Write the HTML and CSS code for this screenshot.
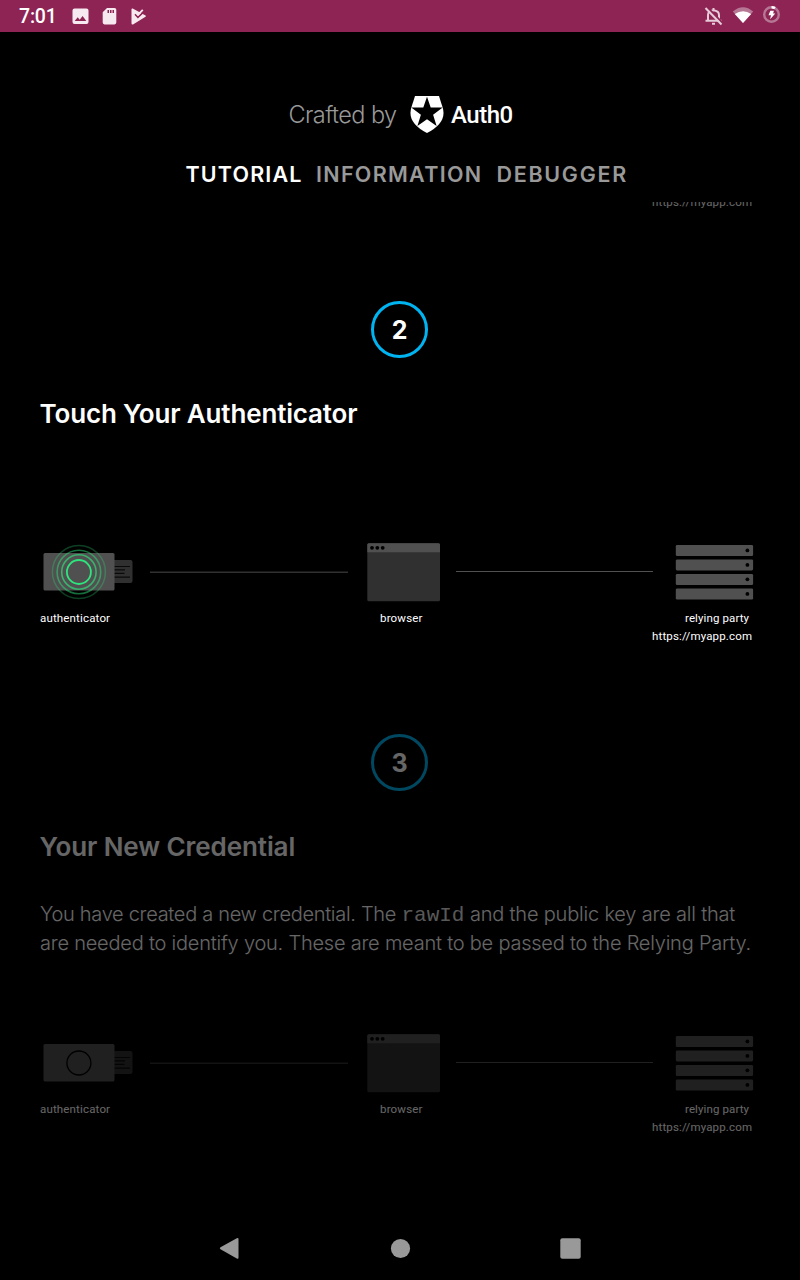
FILE: index.html
```html
<!DOCTYPE html>
<html lang="en">
<head>
<meta charset="utf-8">
<title>WebAuthn Tutorial</title>
<link rel="stylesheet" href="styles.css">
</head>
<body>
<svg width="0" height="0" class="defs">
  <defs>
    <g id="parties">
      <rect x="72" y="30" width="20.500" height="23" rx="2" fill="#303030"/>
      <path d="M72 36.500h18M72 39.900h13M72 43.400h12.500M72 47.200h18" stroke="#0a0a0a" stroke-width="1.200"/>
      <rect x="3.500" y="23" width="71" height="37.500" rx="1.500" fill="#505050"/>
      <path d="M110 42.300h198" stroke="#303030" stroke-width="1.500"/>
      <path d="M416 41.500h197" stroke="#505050" stroke-width="1"/>
      <rect x="327.300" y="13.300" width="72.700" height="57.900" rx="1.500" fill="#303030"/>
      <path d="M327.300 22.200v-7.400q0-1.500 1.500-1.500h69.700q1.500 0 1.500 1.500v7.400z" fill="#505050"/>
      <circle cx="332" cy="17.800" r="1.900"/><circle cx="337.300" cy="17.800" r="1.900"/><circle cx="342.700" cy="17.800" r="1.900"/>
      <g fill="#505050">
        <rect x="635.800" y="15" width="77.300" height="11" rx="1.300"/>
        <rect x="635.800" y="29.400" width="77.300" height="11" rx="1.300"/>
        <rect x="635.800" y="44" width="77.300" height="11" rx="1.300"/>
        <rect x="635.800" y="58.500" width="77.300" height="11" rx="1.300"/>
      </g>
      <circle cx="707.400" cy="20.400" r="1.900"/><circle cx="707.400" cy="34.900" r="1.900"/><circle cx="707.400" cy="49.300" r="1.900"/><circle cx="707.400" cy="63.900" r="1.900"/>
    </g>
  </defs>
</svg>
<div class="screen">
  <div class="status">
    <span class="time">7:01</span>
    <svg class="status-left" width="80" height="32" viewBox="0 0 80 32" fill="#f6e9ef">
      <path fill-rule="evenodd" d="M4.500 8.500h12q2 0 2 2v11.500q0 2-2 2h-12q-2 0-2-2v-11.500q0-2 2-2zM4.700 21h11.600l-3.700-5-2.900 3.700-2-2.400z"/>
      <path fill-rule="evenodd" d="M37 8h7.500q1.800 0 1.800 1.800v12.800q0 1.800-1.800 1.800h-10q-1.800 0-1.800-1.800V12.300zM37.500 10v3h1.500v-3zM40 10v3h1.500v-3zM42.500 10v3h1.500v-3z"/>
      <path d="M61.500 9q.4-.9 1.200-.4l12.800 6.900q1 .6 0 1.200l-12.500 7.700q-1.500.4-1.500-1z"/>
      <path d="M65 14.300l2.900 3 7.300-7" fill="none" stroke="#8e2454" stroke-width="1.600"/>
      <path d="M65.800 12.400l2.200 2.200 4.800-4.700" fill="none" stroke="#f6e9ef" stroke-width="1.900"/>
    </svg>
    <svg class="status-right" width="80" height="32" viewBox="0 0 80 32">
      <g fill="none" stroke="#e6cbd8" stroke-width="2">
        <path d="M8 20.500v-5.500q0-4 5.500-4.700q5.500.7 5.500 4.700v5.500"/>
        <path d="M5.500 20.800h16M13.500 10.500v-2.500M12 23.700h3"/>
        <path d="M7 7l16 16.500" stroke="#8e2454" stroke-width="2"/>
        <path d="M5.500 8l16 16.500"/>
      </g>
      <path d="M43 23L32.800 11.500q10.200-8.500 20.400 0z" fill="#b67795"/>
      <path d="M43 23l-8.200-9q8.200-5.500 16.400 0z" fill="#fff"/>
      <circle cx="71.500" cy="14.500" r="7.300" fill="none" stroke="#b67795" stroke-width="2.400"/>
      <path d="M71.500 7.200q2 0 3.500 1" fill="none" stroke="#fff" stroke-width="2.600"/>
      <path d="M70.300 10.700h3.600l-.8 2.800h2.200l-5.200 5.700.9-4h-2.500z" fill="#fff"/>
    </svg>
  </div>

  <header class="header">
    <div class="brand">
      <span class="crafted">Crafted by</span>
      <svg class="shield" width="34" height="38" viewBox="0 0 34 38">
        <path d="M5 1h24l3.800 12Q37 27.500 17 38Q-3 27.500 1.200 13z" fill="#fff"/>
        <path d="M17 1.800l3.700 10.700h12l-9.600 7.300 3.500 11.300-9.600-6.900-9.600 6.900 3.500-11.300-9.600-7.300h12z"/>
      </svg>
      <span class="auth">Auth0</span>
    </div>
    <nav class="tabs">
      <span class="tab tab-1 active">TUTORIAL</span>
      <span class="tab tab-2">INFORMATION</span>
      <span class="tab tab-3">DEBUGGER</span>
    </nav>
  </header>

  <main class="content">
    <section class="step dim first">
      <svg class="diagram" viewBox="0 0 720 120">
        <use href="#parties"/>
        <text class="label" x="612" y="109" textLength="100">https://myapp.com</text>
      </svg>
    </section>

    <section class="step">
      <div class="number">2</div>
      <h2 class="title title-touch">Touch Your Authenticator</h2>
      <svg class="diagram" viewBox="0 0 720 120">
        <use href="#parties"/>
        <g fill="none" stroke="#2ee57d">
          <circle cx="38.900" cy="42" r="26.500" stroke-width="1.500" opacity=".28"/>
          <circle cx="38.900" cy="42" r="21.800" stroke-width="1.600" opacity=".48"/>
          <circle cx="38.900" cy="42" r="17.200" stroke-width="1.600" opacity=".65"/>
          <circle cx="38.900" cy="42" r="12" stroke-width="1.800"/>
        </g>
        <text class="label" x="0" y="92" textLength="70">authenticator</text>
        <text class="label" x="340" y="92" textLength="42.500">browser</text>
        <text class="label" x="645" y="92" textLength="64">relying party</text>
        <text class="label" x="612" y="110" textLength="100">https://myapp.com</text>
      </svg>
    </section>

    <section class="step dim">
      <div class="number">3</div>
      <h2 class="title title-cred">Your New Credential</h2>
      <p class="text"><span class="l1a">You have created a new credential. The </span><code>rawId</code><span class="l1b"> and the public key are all that</span><br><span class="l2">are needed to identify you. These are meant to be passed to the Relying Party.</span></p>
      <svg class="diagram" viewBox="0 0 720 120">
        <use href="#parties"/>
        <circle cx="38.900" cy="42" r="12" fill="none" stroke="#000" stroke-width="1.300"/>
        <text class="label" x="0" y="92" textLength="70">authenticator</text>
        <text class="label" x="340" y="92" textLength="42.500">browser</text>
        <text class="label" x="645" y="92" textLength="64">relying party</text>
        <text class="label" x="612" y="110" textLength="100">https://myapp.com</text>
      </svg>
    </section>
  </main>

  <footer class="navbar">
    <svg width="400" height="64" viewBox="200 1216 400 64" fill="#999">
      <path d="M220.500 1247.300L236.800 1238.200Q238.500 1237.300 238.500 1239V1257.500Q238.500 1259.300 236.800 1258.400L220.500 1249.300Q219 1248.300 220.500 1247.300z"/>
      <circle cx="400.500" cy="1248.500" r="9.600"/>
      <rect x="560.300" y="1238.300" width="20.400" height="20.400" rx="2"/>
    </svg>
  </footer>
</div>
</body>
</html>
```

FILE: styles.css
```css
* { box-sizing: border-box; }
body { margin: 0; background: #000; color: #fff; font-family: Inter, "Liberation Sans", sans-serif; }
.defs { display: block; }
.screen { width: 800px; height: 1280px; display: flex; flex-direction: column; overflow: hidden; background: #000; }

.status { height: 32px; flex: none; display: flex; align-items: center; background: #8e2454; padding: 0 20px 0 19px; }
.time { font: 500 19.500px/32px Roboto, sans-serif; color: #fff; width: 51px; padding-top: 1px; letter-spacing: -0.2px; white-space: nowrap; }
.status-right { margin-left: auto; }

.header { height: 170px; flex: none; padding-top: 63px; }
.brand { display: flex; align-items: center; height: 38px; padding-left: 288.500px; white-space: nowrap; }
.crafted { width: 121px; font-size: 23.500px; font-weight: 300; color: #999; letter-spacing: -0.6px; }
.auth { font: 500 24px/38px Roboto, sans-serif; margin-left: 7.500px; padding-top: 2px; letter-spacing: -0.5px; }
.tabs { display: flex; margin-top: 27px; padding-left: 185.500px; font-size: 21.500px; line-height: 28px; font-weight: 600; letter-spacing: 1.3px; color: #999; white-space: nowrap; }
.tab-1 { width: 130.500px; letter-spacing: 1.15px; }
.tab-2 { width: 180.500px; }
.tab-3 { letter-spacing: 1.7px; }
.active { color: #fff; }

.content { flex: 1; min-height: 0; overflow: hidden; padding: 0 40px; }
.dim { opacity: 0.4; }
.first { margin-top: -105px; }
.step { margin-bottom: 84px; }
.number { width: 57px; height: 57px; margin: 0 auto; border: 3px solid #00b4f1; border-radius: 50%; font-size: 25px; font-weight: 700; line-height: 52px; text-align: center; position: relative; left: -0.5px; }
.title { margin: 40px 0 0 -0.5px; font-size: 26px; line-height: 32px; height: 32px; font-weight: 600; letter-spacing: -0.16px; white-space: nowrap; }
.title-cred { letter-spacing: -0.08px; }
.diagram { display: block; width: 720px; height: 120px; margin-top: 100px; }
.first .diagram { margin-top: 0; }
.label { font: 400 11.500px Roboto, sans-serif; fill: #fff; }
.text { margin: 37px 0 0; height: 60px; font-size: 20px; line-height: 29px; font-weight: 300; white-space: nowrap; }
.l1a { letter-spacing: -0.3px; }
.l1b { letter-spacing: -0.19px; }
.l2 { letter-spacing: -0.22px; }
.text code { font-family: "Liberation Mono", monospace; font-size: 21px; line-height: 1; letter-spacing: 0; color: #ddd; }
.text + .diagram { margin-top: 61px; }

.navbar { height: 64px; flex: none; display: flex; justify-content: center; }
```
